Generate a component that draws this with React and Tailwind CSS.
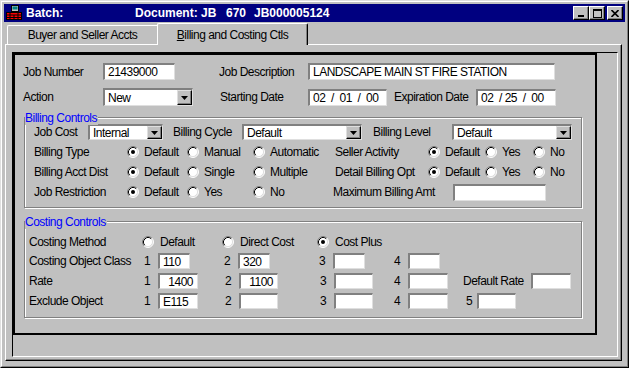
import React from 'react';

const Radio = ({ on }) => (
  <svg width="12" height="12" viewBox="0 0 12 12" className="shrink-0">
    <circle cx="6" cy="6" r="5" fill="#fff" />
    <path d="M2.11 9.89 A5.5 5.5 0 0 1 9.89 2.11" fill="none" stroke="#808080" />
    <path d="M9.89 2.11 A5.5 5.5 0 0 1 2.11 9.89" fill="none" stroke="#fff" />
    <path d="M2.82 9.18 A4.5 4.5 0 0 1 9.18 2.82" fill="none" stroke="#000" />
    <path d="M9.18 2.82 A4.5 4.5 0 0 1 2.82 9.18" fill="none" stroke="#dfdfdf" />
    {on && <circle cx="6" cy="6" r="2" fill="#000" />}
  </svg>
);

const Opt = ({ w, on, label, gap = 'ml-[5px]' }) => (
  <div className={`${w} flex items-center`}>
    <Radio on={on} />
    <span className={gap}>{label}</span>
  </div>
);

const sunken =
  'bg-white border-t-2 border-l-2 border-r border-b border-t-[#808080] border-l-[#808080] border-r-[#dfdfdf] border-b-[#dfdfdf]';

const Field = ({ w, h = 'h-[16px]', right, children }) => (
  <div
    className={`${w} ${h} ${sunken} flex items-center whitespace-pre overflow-hidden ${
      right ? 'justify-end pr-[4px]' : 'pl-[3px]'
    }`}
  >
    {children}
  </div>
);

const Select = ({ w, h = 'h-[16px]', value }) => (
  <div className={`${w} ${h} ${sunken} flex items-center`}>
    <span className="flex-1 pl-[3px]">{value}</span>
    <div className="w-[15px] h-full bg-[#c0c0c0] border-t border-l border-t-[#dfdfdf] border-l-[#dfdfdf] border-r border-b border-r-black border-b-black shadow-[inset_-1px_-1px_0_#808080] flex items-center justify-center">
      <svg width="7" height="4" viewBox="0 0 7 4">
        <path d="M0 0h7L3.5 4z" fill="#000" />
      </svg>
    </div>
  </div>
);

const Group = ({ title, className, children }) => (
  <div
    className={`relative border border-[#808080] shadow-[inset_1px_1px_0_#fff,1px_1px_0_#fff] ${className}`}
  >
    <span className="absolute top-[-7px] left-0 bg-[#c0c0c0] text-[#0000ff] pr-[1px]">
      {title}
    </span>
    {children}
  </div>
);

const Num = ({ children, className = 'w-[18px] pl-[4px]' }) => (
  <span className={className}>{children}</span>
);

const TitleBtn = ({ children, className = '' }) => (
  <div
    className={`w-[16px] h-[14px] bg-[#c0c0c0] border-t border-l border-t-white border-l-white border-r border-b border-r-black border-b-black shadow-[inset_-1px_-1px_0_#808080] flex ${className}`}
  >
    {children}
  </div>
);

const AppIcon = () => (
  <svg width="16" height="16" viewBox="0 0 16 16" className="shrink-0">
    <rect x="5.5" y="0.5" width="7" height="6" fill="#c0c0c0" stroke="#000" />
    <rect x="6.5" y="1.5" width="5" height="3" fill="#008080" />
    <rect x="8" y="7" width="2" height="1" fill="#000" />
    <rect x="0.5" y="7.5" width="15" height="7" fill="#ff0000" stroke="#000" />
    <path d="M1 10h14M1 12.5h14M4 8v6M8 10v4.5M12 8v6" stroke="#000" strokeWidth="1" />
  </svg>
);

export default function App() {
  return (
    <div className="w-[629px] h-[368px] bg-[#c0c0c0] border border-t-[#dfdfdf] border-l-[#dfdfdf] border-r-black border-b-black font-['Liberation_Sans',Arial,sans-serif] text-[12px] leading-[14px] tracking-[-0.5px] text-black overflow-hidden">
      <div className="h-full border border-t-white border-l-white border-r-[#808080] border-b-[#808080] p-[2px] flex flex-col">
        {/* title bar */}
        <div className="h-[18px] bg-[#000080] flex items-center text-white font-bold text-[12px] tracking-normal whitespace-pre">
          <div className="ml-[2px]">
            <AppIcon />
          </div>
          <span className="ml-[4px] w-[109px]">Batch:</span>
          <span className="w-[91px]">Document: JB</span>
          <span className="w-[28px]">670</span>
          <span>JB000005124</span>
          <div className="flex-1" />
          <TitleBtn className="items-end pl-[4px] pb-[2px]">
            <div className="w-[6px] h-[2px] bg-black" />
          </TitleBtn>
          <TitleBtn className="items-center justify-center">
            <div className="w-[9px] h-[9px] border border-black border-t-2" />
          </TitleBtn>
          <TitleBtn className="ml-[2px] mr-[2px] items-center justify-center">
            <svg width="8" height="7" viewBox="0 0 8 7">
              <path d="M0.5 0L7.5 7M7.5 0L0.5 7" stroke="#000" strokeWidth="1.6" />
            </svg>
          </TitleBtn>
        </div>

        <div className="pl-[1px] pr-[3px] flex flex-col">
          {/* tabs */}
          <div className="flex items-end h-[22px] pl-[2px] relative z-10">
            <div className="w-[150px] h-[19px] border-l border-t border-white rounded-tl-[2px] flex items-center justify-center">
              Buyer and Seller Accts
            </div>
            <div className="w-[151px] h-[22px] mb-[-1px] bg-[#c0c0c0] border-l border-t border-white border-r border-r-black shadow-[inset_-1px_0_0_#808080] rounded-t-[2px] flex items-center justify-center">
              <span>
                <span className="underline">B</span>illing and Costing Ctls
              </span>
            </div>
          </div>

          {/* tab panel */}
          <div className="h-[317px] border-l border-t border-white border-r border-b border-r-black border-b-black shadow-[inset_-1px_-1px_0_#808080] pl-[6px] pt-[7px]">
            <div className="w-[606px] h-[305px] border-l border-t border-l-black border-t-black border-r border-b border-r-white border-b-white">
              <div className="w-[584px] h-[282px] border-2 border-black pt-[8px] pl-[8px]">
                <div className="flex items-center h-[17px]">
                  <span className="w-[80px]">Job Number</span>
                  <Field w="w-[72px]" h="h-[17px]">21439000</Field>
                  <span className="ml-[44px] w-[89px]">Job Description</span>
                  <Field w="w-[247px]" h="h-[17px]">LANDSCAPE MAIN ST FIRE STATION</Field>
                </div>
                <div className="flex items-center h-[18px] mt-[8px]">
                  <span className="w-[80px]">Action</span>
                  <Select w="w-[90px]" h="h-[18px]" value="New" />
                  <span className="ml-[27px] w-[88px]">Starting Date</span>
                  <Field w="w-[79px]" h="h-[17px]">{'02  /  01  /  00'}</Field>
                  <span className="ml-[7px] w-[82px]">Expiration Date</span>
                  <Field w="w-[80px]" h="h-[17px]">{'02  / 25  /  00'}</Field>
                </div>

                <Group title="Billing Controls" className="w-[558px] h-[91px] mt-[11px] ml-[1px] pt-[6px] pl-[9px]">
                  <div className="flex items-center h-[16px]">
                    <span className="w-[54px]">Job Cost</span>
                    <Select w="w-[75px]" value="Internal" />
                    <span className="ml-[10px] w-[69px]">Billing Cycle</span>
                    <Select w="w-[120px]" value="Default" />
                    <span className="ml-[11px] w-[79px]">Billing Level</span>
                    <Select w="w-[120px]" value="Default" />
                  </div>
                  <div className="flex items-center h-[16px] mt-[4px]">
                    <span className="w-[93px]">Billing Type</span>
                    <Opt w="w-[60px]" on label="Default" />
                    <Opt w="w-[66px]" label="Manual" />
                    <Opt w="w-[82px]" label="Automatic" />
                    <span className="w-[93px]">Seller Activity</span>
                    <Opt w="w-[57px]" on label="Default" />
                    <Opt w="w-[48px]" label="Yes" />
                    <Opt w="w-[40px]" label="No" />
                  </div>
                  <div className="flex items-center h-[16px] mt-[4px]">
                    <span className="w-[93px]">Billing Acct Dist</span>
                    <Opt w="w-[60px]" on label="Default" />
                    <Opt w="w-[66px]" label="Single" />
                    <Opt w="w-[82px]" label="Multiple" />
                    <span className="w-[93px]">Detail Billing Opt</span>
                    <Opt w="w-[57px]" on label="Default" />
                    <Opt w="w-[48px]" label="Yes" />
                    <Opt w="w-[40px]" label="No" />
                  </div>
                  <div className="flex items-center h-[16px] mt-[4px]">
                    <span className="w-[93px]">Job Restriction</span>
                    <Opt w="w-[60px]" on label="Default" />
                    <Opt w="w-[66px]" label="Yes" />
                    <Opt w="w-[80px]" label="No" />
                    <span className="w-[120px]">Maximum Billing Amt</span>
                    <Field w="w-[93px]" h="h-[17px]" />
                  </div>
                </Group>

                <Group title="Costing Controls" className="w-[558px] h-[97px] mt-[13px] ml-[1px] pt-[12px] pl-[4px]">
                  <div className="flex items-center h-[16px]">
                    <span className="w-[113px]">Costing Method</span>
                    <Opt w="w-[80px]" label="Default" gap="ml-[6px]" />
                    <Opt w="w-[95px]" label="Direct Cost" gap="ml-[6px]" />
                    <Opt w="w-[90px]" on label="Cost Plus" gap="ml-[6px]" />
                  </div>
                  <div className="flex items-center h-[16px] mt-[3px]">
                    <span className="w-[111px]">Costing Object Class</span>
                    <Num>1</Num>
                    <Field w="w-[32px]">110</Field>
                    <span className="ml-[30px]" />
                    <Num>2</Num>
                    <Field w="w-[32px]">320</Field>
                    <span className="ml-[45px]" />
                    <Num>3</Num>
                    <Field w="w-[32px]" />
                    <span className="ml-[25px]" />
                    <Num>4</Num>
                    <Field w="w-[32px]" />
                  </div>
                  <div className="flex items-center h-[16px] mt-[4px]">
                    <span className="w-[111px]">Rate</span>
                    <Num>1</Num>
                    <Field w="w-[40px]" right>1400</Field>
                    <span className="ml-[23px]" />
                    <Num>2</Num>
                    <Field w="w-[39px]" right>1100</Field>
                    <span className="ml-[38px]" />
                    <Num>3</Num>
                    <Field w="w-[39px]" />
                    <span className="ml-[17px]" />
                    <Num>4</Num>
                    <Field w="w-[40px]" />
                    <span className="ml-[15px] w-[68px]">Default Rate</span>
                    <Field w="w-[40px]" />
                  </div>
                  <div className="flex items-center h-[16px] mt-[4px]">
                    <span className="w-[111px]">Exclude Object</span>
                    <Num>1</Num>
                    <Field w="w-[40px]">E115</Field>
                    <span className="ml-[23px]" />
                    <Num>2</Num>
                    <Field w="w-[39px]" />
                    <span className="ml-[38px]" />
                    <Num>3</Num>
                    <Field w="w-[39px]" />
                    <span className="ml-[17px]" />
                    <Num>4</Num>
                    <Field w="w-[40px]" />
                    <span className="ml-[14px]" />
                    <Num className="w-[15px] pl-[4px]">5</Num>
                    <Field w="w-[39px]" />
                  </div>
                </Group>
              </div>
            </div>
          </div>
        </div>
      </div>
    </div>
  );
}
